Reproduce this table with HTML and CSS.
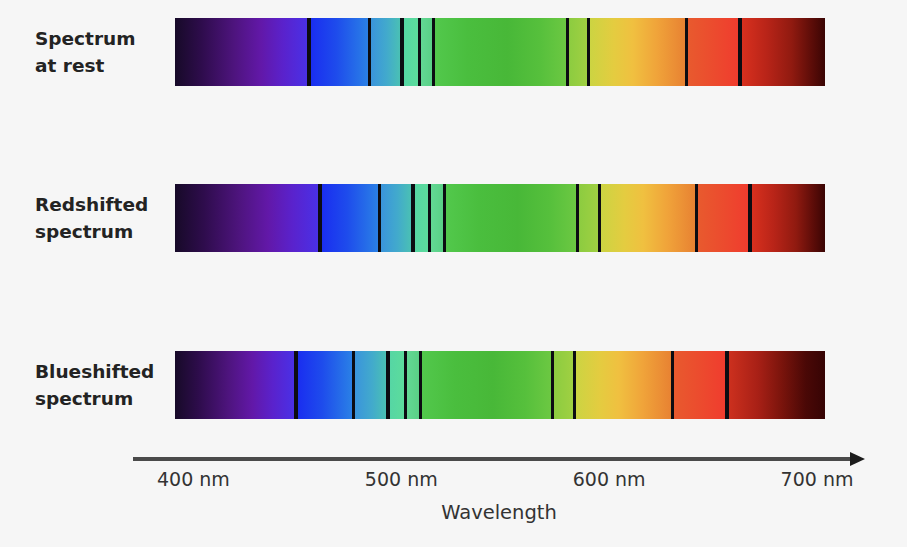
FILE: index.html
```html
<!DOCTYPE html>
<html lang="en">
<head>
<meta charset="utf-8">
<title>Spectrum shifts</title>
<link rel="stylesheet" href="styles.css">
</head>
<body>
<main class="chart">
  <div class="row">
    <div class="label">Spectrum<br>at rest</div>
    <div class="bar">
      <div class="seg violet" style="width:132px"></div><div class="line thick"></div>
      <div class="seg blue" style="width:56.5px"></div><div class="line"></div>
      <div class="seg cyan" style="width:29.5px"></div><div class="line thick"></div>
      <div class="seg mint" style="width:13.5px"></div><div class="line"></div>
      <div class="seg mint2" style="width:11px"></div><div class="line"></div>
      <div class="seg green" style="width:131px"></div><div class="line"></div>
      <div class="seg lime" style="width:18px"></div><div class="line"></div>
      <div class="seg yellow" style="width:95px"></div><div class="line"></div>
      <div class="seg orange" style="width:50.5px"></div><div class="line thick"></div>
      <div class="seg red" style="width:83px"></div>
    </div>
  </div>
  <div class="row">
    <div class="label">Redshifted<br>spectrum</div>
    <div class="bar">
      <div class="seg violet" style="width:143px"></div><div class="line thick"></div>
      <div class="seg blue" style="width:55.5px"></div><div class="line"></div>
      <div class="seg cyan" style="width:30.5px"></div><div class="line thick"></div>
      <div class="seg mint" style="width:12.5px"></div><div class="line"></div>
      <div class="seg mint2" style="width:12px"></div><div class="line"></div>
      <div class="seg green" style="width:130px"></div><div class="line"></div>
      <div class="seg lime" style="width:19px"></div><div class="line"></div>
      <div class="seg yellow" style="width:94px"></div><div class="line"></div>
      <div class="seg orange" style="width:50.5px"></div><div class="line thick"></div>
      <div class="seg red" style="width:73px"></div>
    </div>
  </div>
  <div class="row">
    <div class="label">Blueshifted<br>spectrum</div>
    <div class="bar">
      <div class="seg violet" style="width:119px"></div><div class="line thick"></div>
      <div class="seg blue" style="width:53.5px"></div><div class="line"></div>
      <div class="seg cyan" style="width:31.5px"></div><div class="line thick"></div>
      <div class="seg mint" style="width:13.5px"></div><div class="line"></div>
      <div class="seg mint2" style="width:12px"></div><div class="line"></div>
      <div class="seg green" style="width:129px"></div><div class="line"></div>
      <div class="seg lime" style="width:19px"></div><div class="line"></div>
      <div class="seg yellow" style="width:95px"></div><div class="line"></div>
      <div class="seg orange" style="width:51.5px"></div><div class="line thick"></div>
      <div class="seg red dark" style="width:96px"></div>
    </div>
  </div>
  <div class="axis">
    <div class="axis-arrow">
      <div class="axis-line"></div>
      <div class="axis-head"></div>
    </div>
    <div class="ticks">
      <span class="tick">400 nm</span>
      <span class="tick">500 nm</span>
      <span class="tick">600 nm</span>
      <span class="tick">700 nm</span>
    </div>
    <div class="axis-title">Wavelength</div>
  </div>
</main>
</body>
</html>
```
FILE: styles.css
```css
html, body {
  margin: 0;
  padding: 0;
  background: #f6f6f6;
}
body {
  font-family: "DejaVu Sans", "Liberation Sans", sans-serif;
  color: #222;
}
.chart {
  display: flex;
  flex-direction: column;
  padding-top: 18px;
  width: 907px;
  height: 547px;
  box-sizing: border-box;
}
.row {
  display: flex;
  align-items: center;
  height: 68px;
  margin-bottom: 98px;
}
.row:nth-child(2) {
  margin-bottom: 99px;
}
.row:nth-child(3) {
  margin-bottom: 0;
}
.label {
  width: 175px;
  flex-shrink: 0;
  box-sizing: border-box;
  padding-left: 35px;
  font-weight: bold;
  font-size: 18.5px;
  line-height: 27px;
  color: #232323;
}
.bar {
  display: flex;
  width: 650px;
  height: 68px;
  flex-shrink: 0;
}
.seg {
  height: 100%;
  flex-shrink: 0;
}
.line {
  width: 3px;
  flex-shrink: 0;
  background: #0c0c12;
}
.line.thick {
  width: 4px;
}
.violet {
  background: linear-gradient(90deg, #170a28 0%, #2e0c4c 20%, #4e147e 45%, #6218a8 65%, #5a22cc 82%, #4a30e6 100%);
}
.blue {
  background: linear-gradient(90deg, #1a2ef0 0%, #1e4cec 45%, #2a80e6 100%);
}
.cyan {
  background: linear-gradient(90deg, #3a94dc 0%, #42aacc 55%, #4ac0b4 100%);
}
.mint {
  background: linear-gradient(90deg, #56d6a4 0%, #5cdc9c 100%);
}
.mint2 {
  background: linear-gradient(90deg, #62d894 0%, #5ad086 100%);
}
.green {
  background: linear-gradient(90deg, #52c84c 0%, #4abe3e 25%, #48b838 55%, #56c03c 80%, #6cc842 100%);
}
.lime {
  background: linear-gradient(90deg, #8ccc40 0%, #a0d042 100%);
}
.yellow {
  background: linear-gradient(90deg, #ccd442 0%, #e4cc40 25%, #f0c040 45%, #f0a43a 70%, #e88232 100%);
}
.orange {
  background: linear-gradient(90deg, #e85a2e 0%, #ec4a2e 55%, #f03c2e 100%);
}
.red {
  background: linear-gradient(90deg, #d8301e 0%, #b82418 30%, #901a10 60%, #5a0c08 85%, #3a0504 100%);
}
.red.dark {
  background: linear-gradient(90deg, #cc301e 0%, #a82016 30%, #7a140c 55%, #4a0806 80%, #360404 100%);
}
.axis {
  margin-left: 133px;
  width: 732px;
  margin-top: 32px;
  display: flex;
  flex-direction: column;
}
.axis-arrow {
  display: flex;
  align-items: center;
  height: 15px;
}
.axis-line {
  flex: 1;
  height: 4px;
  background: #4a4a4a;
}
.axis-head {
  width: 0;
  height: 0;
  border-left: 15px solid #1c1c1c;
  border-top: 7.5px solid transparent;
  border-bottom: 7.5px solid transparent;
  margin-left: -2px;
}
.ticks {
  display: flex;
  gap: 135px;
  padding-left: 24px;
  margin-top: 2px;
}
.tick {
  font-size: 19px;
  line-height: 22px;
  color: #333;
}
.axis-title {
  margin-top: 12px;
  text-align: center;
  font-size: 19.5px;
  line-height: 22px;
  color: #333;
}
```
